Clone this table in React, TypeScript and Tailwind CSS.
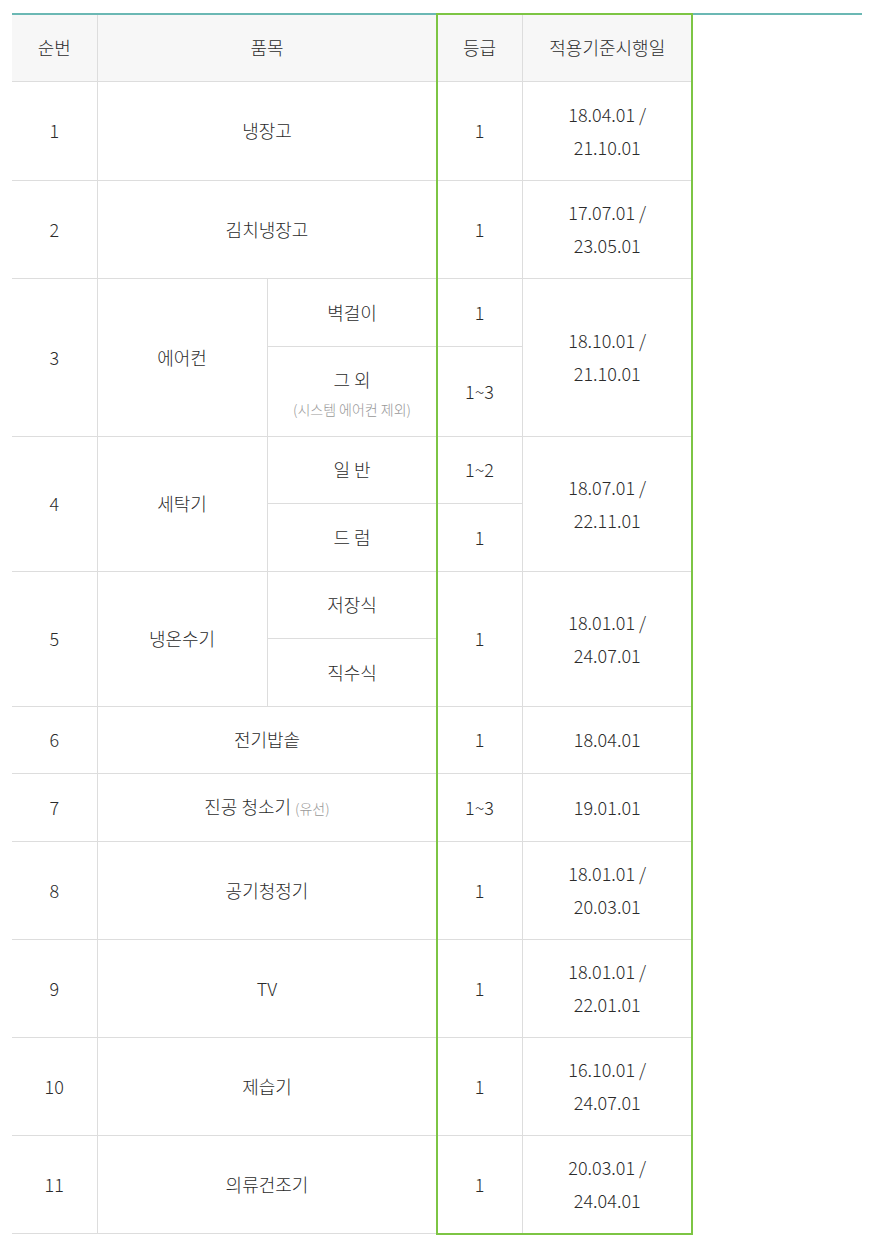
type Row = {
  no: string;
  name: React.ReactNode;
  grade: string;
  date: string[];
  h: string;
};

const simple: Row[] = [
  { no: "1", name: "냉장고", grade: "1", date: ["18.04.01 /", "21.10.01"], h: "h-[99px]" },
  { no: "2", name: "김치냉장고", grade: "1", date: ["17.07.01 /", "23.05.01"], h: "h-[98px]" },
];

const tail: Row[] = [
  { no: "6", name: "전기밥솥", grade: "1", date: ["18.04.01"], h: "h-[67px]" },
  {
    no: "7",
    name: (
      <>
        진공 청소기 <span className="text-[14px] text-[#999]">(유선)</span>
      </>
    ),
    grade: "1~3",
    date: ["19.01.01"],
    h: "h-[68px]",
  },
  { no: "8", name: "공기청정기", grade: "1", date: ["18.01.01 /", "20.03.01"], h: "h-[98px]" },
  { no: "9", name: "TV", grade: "1", date: ["18.01.01 /", "22.01.01"], h: "h-[98px]" },
  { no: "10", name: "제습기", grade: "1", date: ["16.10.01 /", "24.07.01"], h: "h-[98px]" },
  { no: "11", name: "의류건조기", grade: "1", date: ["20.03.01 /", "24.04.01"], h: "h-[98px]" },
];

const td = "border border-[#dddddd] text-center align-middle p-0 font-light";

function Dates({ d }: { d: string[] }) {
  return (
    <>
      {d.map((x) => (
        <div key={x}>{x}</div>
      ))}
    </>
  );
}

function SimpleRow({ r }: { r: Row }) {
  return (
    <tr className={r.h}>
      <td className={`${td} border-l-0`}>{r.no}</td>
      <td className={td} colSpan={2}>
        {r.name}
      </td>
      <td className={td}>{r.grade}</td>
      <td className={`${td} border-r-0`}>
        <Dates d={r.date} />
      </td>
    </tr>
  );
}

export default function App() {
  return (
    <div
      className="min-h-[1244px] bg-white pt-[13px] pl-[12px] text-[18px] leading-[33px] text-[#2b2b2b]"
      style={{ fontFamily: '"Noto Sans CJK KR", "Noto Sans", sans-serif' }}
    >
      <div className="w-[850px] border-t-2 border-[#6bb8b4]">
        <div className="relative w-[680px]">
          <table className="w-[680px] table-fixed border-collapse">
            <colgroup>
              <col className="w-[85px]" />
              <col className="w-[170px]" />
              <col className="w-[170px]" />
              <col className="w-[85px]" />
              <col className="w-[170px]" />
            </colgroup>
            <thead>
              <tr className="h-[66px] bg-[#f7f7f7]">
                <th className={`${td} border-t-0 border-l-0`}>순번</th>
                <th className={`${td} border-t-0`} colSpan={2}>
                  품목
                </th>
                <th className={`${td} border-t-0`}>등급</th>
                <th className={`${td} border-t-0 border-r-0`}>적용기준시행일</th>
              </tr>
            </thead>
            <tbody>
              {simple.map((r) => (
                <SimpleRow key={r.no} r={r} />
              ))}

              <tr className="h-[68px]">
                <td className={`${td} border-l-0`} rowSpan={2}>
                  3
                </td>
                <td className={td} rowSpan={2}>
                  에어컨
                </td>
                <td className={td}>벽걸이</td>
                <td className={td}>1</td>
                <td className={`${td} border-r-0`} rowSpan={2}>
                  <Dates d={["18.10.01 /", "21.10.01"]} />
                </td>
              </tr>
              <tr className="h-[90px]">
                <td className={td}>
                  <div className="pt-[2px]">그 외</div>
                  <div className="text-[14px] leading-[26px] text-[#999]">(시스템 에어컨 제외)</div>
                </td>
                <td className={td}>1~3</td>
              </tr>

              <tr className="h-[67px]">
                <td className={`${td} border-l-0`} rowSpan={2}>
                  4
                </td>
                <td className={td} rowSpan={2}>
                  세탁기
                </td>
                <td className={td}>일 반</td>
                <td className={td}>1~2</td>
                <td className={`${td} border-r-0`} rowSpan={2}>
                  <Dates d={["18.07.01 /", "22.11.01"]} />
                </td>
              </tr>
              <tr className="h-[68px]">
                <td className={td}>드 럼</td>
                <td className={td}>1</td>
              </tr>

              <tr className="h-[67px]">
                <td className={`${td} border-l-0`} rowSpan={2}>
                  5
                </td>
                <td className={td} rowSpan={2}>
                  냉온수기
                </td>
                <td className={td}>저장식</td>
                <td className={td} rowSpan={2}>
                  1
                </td>
                <td className={`${td} border-r-0`} rowSpan={2}>
                  <Dates d={["18.01.01 /", "24.07.01"]} />
                </td>
              </tr>
              <tr className="h-[68px]">
                <td className={td}>직수식</td>
              </tr>

              {tail.map((r) => (
                <SimpleRow key={r.no} r={r} />
              ))}
            </tbody>
          </table>
          {/* highlight box over grade + date columns */}
          <div className="pointer-events-none absolute -top-[2px] -bottom-[1px] left-[424px] w-[257px] border-2 border-[#7dc544]" />
        </div>
      </div>
    </div>
  );
}
